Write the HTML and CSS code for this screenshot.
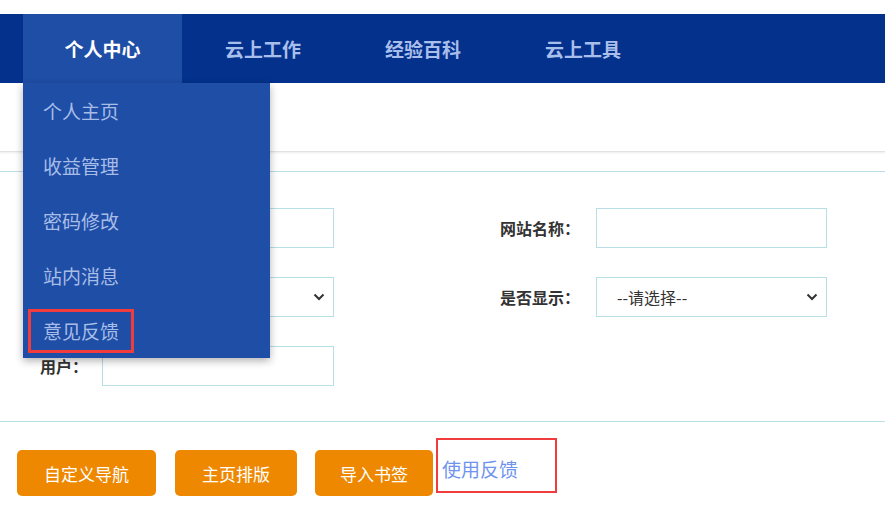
FILE: index.html
```html
<!DOCTYPE html>
<html lang="zh-CN">
<head>
    <meta charset="UTF-8">
    <meta name="viewport" content="width=device-width, initial-scale=1.0">
    <title>个人中心</title>
    <link rel="stylesheet" href="styles.css">
</head>
<body>
    <header class="topnav">
        <ul class="nav">
            <li class="nav-item active">
                <a href="#">个人中心</a>
                <ul class="dropdown">
                    <li><a href="#">个人主页</a></li>
                    <li><a href="#">收益管理</a></li>
                    <li><a href="#">密码修改</a></li>
                    <li><a href="#">站内消息</a></li>
                    <li><a href="#" class="marked">意见反馈</a></li>
                </ul>
            </li>
            <li class="nav-item"><a href="#">云上工作</a></li>
            <li class="nav-item"><a href="#">经验百科</a></li>
            <li class="nav-item"><a href="#">云上工具</a></li>
        </ul>
    </header>

    <div class="subbar"></div>

    <form class="filter">
        <div class="row">
            <div class="field">
                <label></label>
                <input type="text">
            </div>
            <div class="field right">
                <label>网站名称：</label>
                <input type="text">
            </div>
        </div>
        <div class="row">
            <div class="field">
                <label></label>
                <div class="select-wrap">
                    <select><option>--请选择--</option></select>
                    <svg class="chevron" width="12" height="8" viewBox="0 0 12 8"><path d="M1.5 1.5 6 6l4.5-4.5" fill="none" stroke="#333" stroke-width="2"/></svg>
                </div>
            </div>
            <div class="field right">
                <label>是否显示：</label>
                <div class="select-wrap">
                    <select><option>--请选择--</option></select>
                    <svg class="chevron" width="12" height="8" viewBox="0 0 12 8"><path d="M1.5 1.5 6 6l4.5-4.5" fill="none" stroke="#333" stroke-width="2"/></svg>
                </div>
            </div>
        </div>
        <div class="row">
            <div class="field">
                <label>用户：</label>
                <input type="text">
            </div>
        </div>
    </form>

    <div class="actions">
        <button type="button" class="btn">自定义导航</button>
        <button type="button" class="btn">主页排版</button>
        <button type="button" class="btn">导入书签</button>
        <span class="feedback"><a href="#">使用反馈</a></span>
    </div>
</body>
</html>
```

FILE: styles.css
```css
body {
    margin: 0;
    font-family: "Microsoft YaHei", "Noto Sans CJK SC", sans-serif;
    color: #333333;
    background-color: #ffffff;
}
a {
    text-decoration: none;
}
ul {
    list-style: none;
    margin: 0;
    padding: 0;
}

.topnav {
    margin-top: 14px;
    height: 69px;
    background-color: #03318c;
}
.nav {
    display: flex;
    padding-left: 23px;
    height: 100%;
}
.nav-item {
    position: relative;
    width: 160px;
}
.nav-item > a {
    display: block;
    height: 69px;
    line-height: 69px;
    text-align: center;
    font-size: 19px;
    font-weight: bold;
    color: #a9bfeb;
}
.nav-item.active > a {
    background-color: #1f4ea6;
    color: #ffffff;
    width: 159px;
}

.dropdown {
    position: absolute;
    top: 100%;
    left: 0;
    width: 247px;
    background-color: #1f4ea6;
    box-shadow: 0 3px 8px rgba(0, 0, 0, 0.3);
    z-index: 10;
}
.dropdown li {
    height: 55px;
    display: flex;
    align-items: center;
    padding-left: 20px;
}
.dropdown a {
    font-size: 19px;
    color: #a7bde8;
}
.dropdown a.marked {
    margin-left: -15px;
    padding: 0 12px;
    line-height: 38px;
    border: 3px solid #f03c3c;
}

.subbar {
    height: 68px;
    border-bottom: 1px solid #e2e2e2;
    box-shadow: 0 1px 2px rgba(0, 0, 0, 0.08);
}

.filter {
    margin-top: 19px;
    padding: 36px 0 35px;
    border-top: 1px solid #b9dfe6;
    border-bottom: 1px solid #b9dfe6;
    display: flex;
    flex-direction: column;
    gap: 29px;
}
.row {
    display: flex;
    gap: 166px;
}
.field {
    display: flex;
    align-items: center;
    padding-left: 40px;
}
.field.right {
    padding-left: 0;
}
.field label {
    width: 62px;
    font-size: 16px;
    font-weight: bold;
    color: #333333;
}
.field.right label {
    width: 96px;
}
.field input,
.field select {
    box-sizing: border-box;
    width: 232px;
    height: 40px;
    border: 1px solid #b9dfe6;
    background-color: #ffffff;
    font-family: inherit;
    font-size: 16px;
    color: #333333;
    outline: none;
}
.field.right input,
.field.right select {
    width: 231px;
}
.select-wrap {
    position: relative;
    display: flex;
}
.field select {
    appearance: none;
    padding: 0 30px 0 20px;
}
.chevron {
    position: absolute;
    right: 9px;
    top: 16px;
    pointer-events: none;
}

.actions {
    display: flex;
    align-items: flex-start;
    padding: 28px 17px;
}
.btn {
    height: 46px;
    padding: 0 26px;
    margin-right: 19px;
    border: none;
    border-radius: 5px;
    background-color: #ee8800;
    color: #ffffff;
    font-family: inherit;
    font-size: 17px;
    cursor: pointer;
}
.btn:nth-of-type(1) {
    padding: 0 27px;
}
.btn:nth-of-type(2) {
    padding: 0 27px;
    margin-right: 18px;
}
.btn:nth-of-type(3) {
    padding: 0 25px;
    margin-right: 3px;
}
.feedback {
    box-sizing: border-box;
    width: 121px;
    height: 55px;
    margin-top: -12px;
    padding: 15px 0 0 4px;
    border: 2px solid #f03c3c;
}
.feedback a {
    font-size: 19px;
    line-height: 28px;
    color: #6f93ee;
}
```
